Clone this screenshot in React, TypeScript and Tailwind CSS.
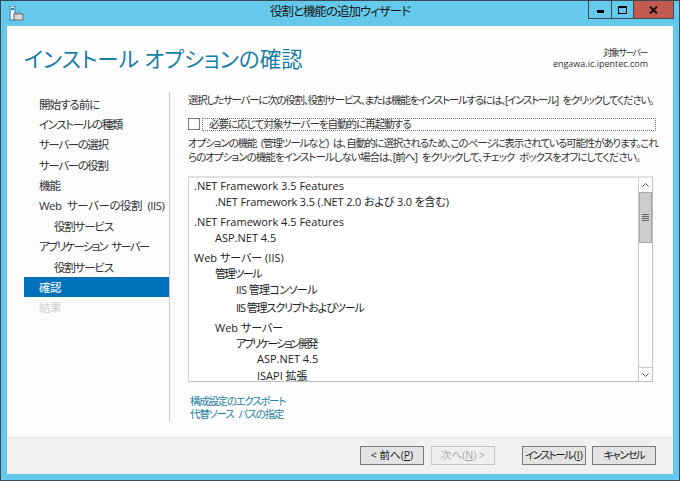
function Nav({ label, sub, active, disabled, track }: { label: string; sub?: boolean; active?: boolean; disabled?: boolean; track: string }) {
  const color = active ? "bg-[#0072bc] text-white" : disabled ? "text-[#cfcfcf]" : "text-[#333]";
  return (
    <div className={`h-[20.4px] leading-[22px] text-[11.5px] whitespace-nowrap [word-spacing:3px] ${track} ${sub ? "pl-[15px] indent-[15px]" : "pl-[15px]"} ${color}`}>{label}</div>
  );
}

function Row({ label, level, mt = "mt-0", track = "tracking-normal" }: { label: string; level: number; mt?: string; track?: string }) {
  const pad = ["pl-[5px]", "pl-[26px]", "pl-[47px]", "pl-[68px]"][level];
  return <div className={`${pad} ${mt} ${track} h-[16px] leading-[16px] text-[11px] text-[#222] whitespace-nowrap`}>{label}</div>;
}

function Btn({ label, disabled, track = "tracking-[-0.5px]" }: { label: React.ReactNode; disabled?: boolean; track?: string }) {
  return (
    <div className={`w-[64px] h-[19px] flex items-center justify-center text-[10.5px] leading-none whitespace-nowrap border ${track} ${disabled ? "border-[#c4c4c4] text-[#aaa] bg-[#efefef]" : "border-[#7a7a7a] text-[#222] bg-[#e3e3e3]"}`}>
      {label}
    </div>
  );
}

export default function App() {
  return (
    <div className="w-[680px] h-[481px] bg-[#64c9ea] border border-[#3a4a55] flex flex-col overflow-hidden [font-family:'Open_Sans','Noto_Sans_CJK_JP',sans-serif] [font-feature-settings:'palt']">
      <div className="h-[25px] shrink-0 relative flex items-center justify-center text-[12.5px] tracking-[-1px] text-[#1a1a1a]">
        <svg className="absolute left-[8px] top-[5px]" width="15" height="15" viewBox="0 0 15 15">
          <rect x="1" y="0" width="5" height="14" fill="#e8f3f8" stroke="#2f7fb0" strokeWidth="1" />
          <rect x="2" y="2" width="3" height="2" fill="#2f7fb0" />
          <rect x="5" y="8" width="9" height="6" fill="#d8d8d8" stroke="#6e6e6e" strokeWidth="1" />
          <path d="M7 8 Q9.5 5 12 8" fill="#b8b8b8" stroke="#6e6e6e" />
        </svg>
        <span className="relative top-[-1px]">役割と機能の追加ウィザード</span>
        <div className="absolute right-[5px] top-0 h-[18px] flex border border-t-0 border-[#3a4a55]">
          <div className="w-[23px] flex items-center justify-center border-r border-[#3a4a55]">
            <div className="w-[7px] h-[3px] mt-[3px] bg-black" />
          </div>
          <div className="w-[22px] flex items-center justify-center border-r border-[#3a4a55]">
            <div className="w-[9px] h-[8px] border border-t-2 border-black" />
          </div>
          <div className="w-[39px] bg-[#c35a50] flex items-center justify-center">
            <svg width="9" height="8" viewBox="0 0 9 8"><path d="M1 0.5 L8 7.5 M8 0.5 L1 7.5" stroke="#111" strokeWidth="2" /></svg>
          </div>
        </div>
      </div>

      <div className="mx-[6px] w-[666px] h-[448px] bg-white flex flex-col">
        <div className="h-[66px] shrink-0 flex justify-between pl-[17px] pr-[25px] bg-[#fefefe]">
          <div className="text-[21.5px] leading-[28px] pt-[19px] text-[#1a7fa8] whitespace-nowrap">インストール オプションの確認</div>
          <div className="pt-[22px] text-right text-[9px] leading-[10.5px] text-[#333] whitespace-nowrap">
            <div className="tracking-[-1.5px] pr-[1px]">対象サーバー</div>
            <div>engawa.ic.ipentec.com</div>
          </div>
        </div>

        <div className="flex-1 flex bg-[#fcfcfc]">
          <div className="w-[146px] ml-[17px] shrink-0 h-[329px] border-r border-[#c8c8c8] pt-[1.5px]">
            <div className="w-[145px]">
              <Nav label="開始する前に" track="tracking-[-1px]" />
              <Nav label="インストールの種類" track="tracking-[-1.4px]" />
              <Nav label="サーバーの選択" track="tracking-[-1.4px]" />
              <Nav label="サーバーの役割" track="tracking-[-1.4px]" />
              <Nav label="機能" track="tracking-[-1px]" />
              <Nav label="Web サーバーの役割 (IIS)" track="tracking-[-0.5px]" />
              <Nav label="役割サービス" sub track="tracking-[-1.2px]" />
              <Nav label="アプリケーション サーバー" track="tracking-[-1.75px]" />
              <Nav label="役割サービス" sub track="tracking-[-1.2px]" />
              <Nav label="確認" active track="tracking-[-0.5px]" />
              <Nav label="結果" disabled track="tracking-[-0.5px]" />
            </div>
          </div>

          <div className="ml-[18px] w-[469px] flex flex-col pt-[1px]">
            <div className="text-[10.5px] leading-[14px] tracking-[-1.25px] [word-spacing:3px] text-[#333] whitespace-nowrap">
              選択したサーバーに次の役割、役割サービス、または機能をインストールするには、[インストール] をクリックしてください。
            </div>
            <div className="mt-[10px] h-[14px] flex items-center">
              <div className="w-[12px] h-[12px] border border-[#7a7a7a] bg-white shrink-0" />
              <div className="ml-[2px] flex-1 h-[13px] mr-[1px] border border-dotted border-[#777] pl-[6px] text-[10.5px] tracking-[-1px] leading-[11px] text-[#333] whitespace-nowrap">必要に応じて対象サーバーを自動的に再起動する</div>
            </div>
            <div className="mt-[5px] text-[10.5px] leading-[14px] [word-spacing:3px] text-[#333] whitespace-nowrap">
              <div className="tracking-[-1.11px]">オプションの機能 (管理ツールなど) は、自動的に選択されるため、このページに表示されている可能性があります。これ</div>
              <div className="tracking-[-0.97px]">らのオプションの機能をインストールしない場合は、[前へ] をクリックして、チェック ボックスをオフにしてください。</div>
            </div>

            <div className="mt-[12px] w-[465px] h-[206px] border border-[#bdbdbd] border-t-2 border-t-[#e0e0e0] border-l-[#d0d0d0] bg-white flex overflow-hidden">
              <div className="flex-1 overflow-hidden">
                <Row label=".NET Framework 3.5 Features" level={0} />
                <Row label=".NET Framework 3.5 (.NET 2.0 および 3.0 を含む)" level={1} track="tracking-[-0.15px]" />
                <Row label=".NET Framework 4.5 Features" level={0} mt="mt-[4px]" />
                <Row label="ASP.NET 4.5" level={1} />
                <Row label="Web サーバー (IIS)" level={0} mt="mt-[4px]" />
                <Row label="管理ツール" level={1} track="tracking-[-1.4px]" />
                <Row label="IIS 管理コンソール" level={2} track="tracking-[-0.6px]" />
                <Row label="IIS 管理スクリプトおよびツール" level={2} mt="mt-[2px]" track="tracking-[-1.1px]" />
                <Row label="Web サーバー" level={1} mt="mt-[4px]" />
                <Row label="アプリケーション開発" level={2} track="tracking-[-2px]" />
                <Row label="ASP.NET 4.5" level={3} mt="mt-[-1px]" />
                <Row label="ISAPI 拡張" level={3} mt="mt-[1px]" />
              </div>
              <div className="w-[14px] shrink-0 border-l border-[#c8c8c8] bg-white flex flex-col items-center">
                <div className="h-[14px] w-full flex items-center justify-center">
                  <svg width="7" height="4" viewBox="0 0 7 4"><path d="M0.5 3.5 L3.5 0.5 L6.5 3.5" fill="none" stroke="#555" /></svg>
                </div>
                <div className="h-[51px] w-full bg-[#cdcdcd] border border-[#a8a8a8] flex flex-col items-center justify-center gap-[1px]">
                  <div className="w-[7px] h-px bg-[#666]" />
                  <div className="w-[7px] h-px bg-[#666]" />
                  <div className="w-[7px] h-px bg-[#666]" />
                  <div className="w-[7px] h-px bg-[#666]" />
                </div>
                <div className="flex-1" />
                <div className="h-[14px] w-full border-t border-[#c8c8c8] flex items-center justify-center">
                  <svg width="7" height="4" viewBox="0 0 7 4"><path d="M0.5 0.5 L3.5 3.5 L6.5 0.5" fill="none" stroke="#555" /></svg>
                </div>
              </div>
            </div>

            <div className="mt-[13px] pl-[2px] text-[10.5px] leading-[13px] text-[#1f7f9f] whitespace-nowrap [word-spacing:3px]">
              <div className="tracking-[-1.3px]">構成設定のエクスポート</div>
              <div className="tracking-[-1.05px]">代替ソース パスの指定</div>
            </div>
          </div>
        </div>

        <div className="h-[37px] shrink-0 bg-[#f0f0f0] border-t border-[#e4e4e4] flex items-center pb-[1px] pl-[353px]">
          <Btn label={<>&lt; 前へ(<u>P</u>)</>} track="tracking-normal" />
          <div className="ml-[7px]"><Btn label={<>次へ(<u>N</u>) &gt;</>} disabled track="tracking-normal" /></div>
          <div className="ml-[27px]"><Btn label={<><span className="tracking-[-1.4px]">インストール</span><span className="ml-[1px] tracking-normal">(<u>I</u>)</span></>} track="tracking-normal" /></div>
          <div className="ml-[6px]"><Btn label="キャンセル" track="tracking-[-1.4px]" /></div>
        </div>
      </div>
    </div>
  );
}
